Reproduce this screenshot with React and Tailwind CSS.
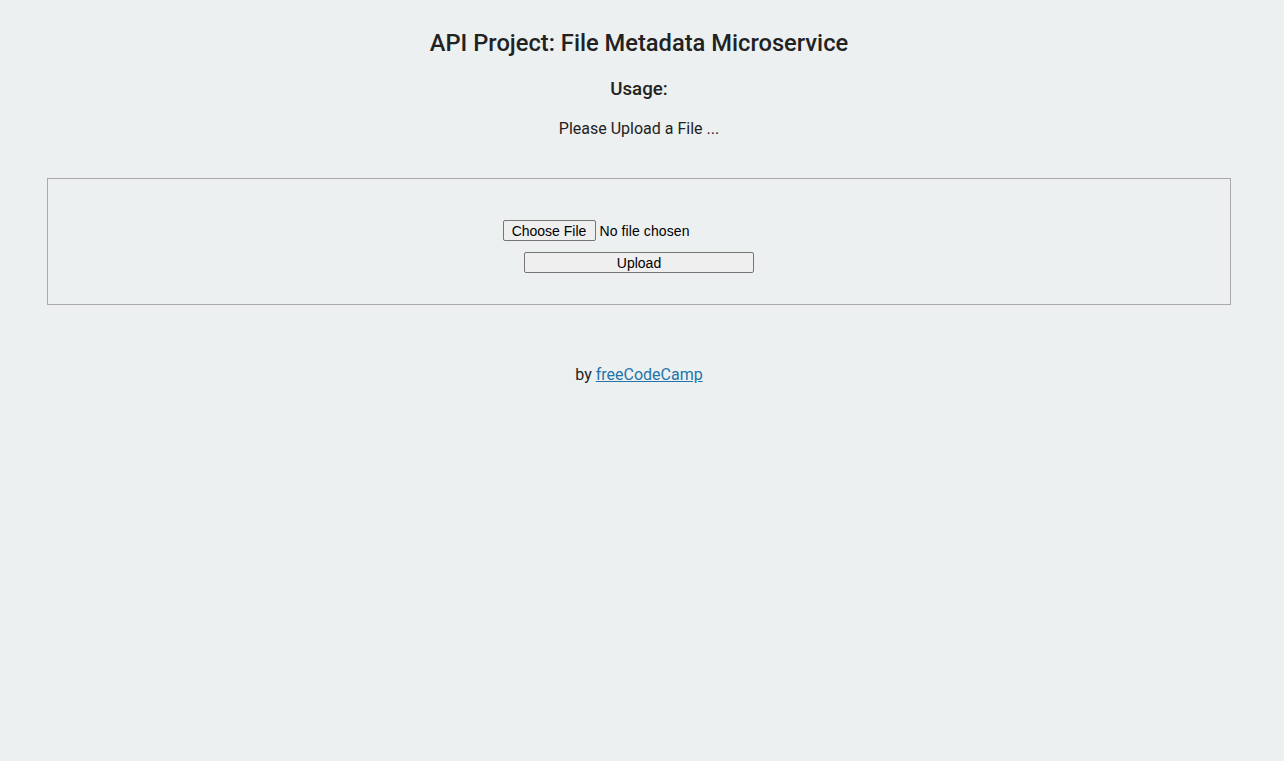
import React from 'react';

export default function App() {
  return (
    <div className="min-h-screen bg-[#ecf0f1] text-[#222] text-center text-[16px] pr-[6px]" style={{ fontFamily: 'Roboto, "Liberation Sans", sans-serif' }}>
      <div className="pt-[29px]">
        <h2 className="text-[23.7px] leading-[28px] font-medium">API Project: File Metadata Microservice</h2>
        <h3 className="mt-[21px] text-[18.7px] leading-[22px] font-medium">Usage:</h3>
        <p className="mt-[19px] leading-[20px]">Please Upload a File ...</p>
      </div>

      {/* upload form */}
      <div className="mt-[39px] ml-[47px] w-[1184px] h-[127px] border border-[#aaa] pt-[41px]">
        <div className="flex flex-col items-center gap-[11px]" style={{ fontFamily: '"Liberation Sans", Arial, sans-serif' }}>
          <div className="flex items-center h-[21px] w-[273px] text-[14px] leading-[21px] text-black">
            <button className="w-[93px] h-[21px] bg-[#efefef] border border-[#767676] rounded-[2px] leading-[18px] pt-[1px]">Choose File</button>
            <span className="ml-[4px] mt-[1px] tracking-[0.1px]">No file chosen</span>
          </div>
          <button className="w-[230px] h-[21px] bg-[#efefef] border border-[#767676] rounded-[2px] text-[14px] leading-[18px] pt-[1px] text-black">Upload</button>
        </div>
      </div>

      <p className="mt-[60px] leading-[20px]">
        by <a href="#" className="text-[#2574a9] underline">freeCodeCamp</a>
      </p>
    </div>
  );
}
